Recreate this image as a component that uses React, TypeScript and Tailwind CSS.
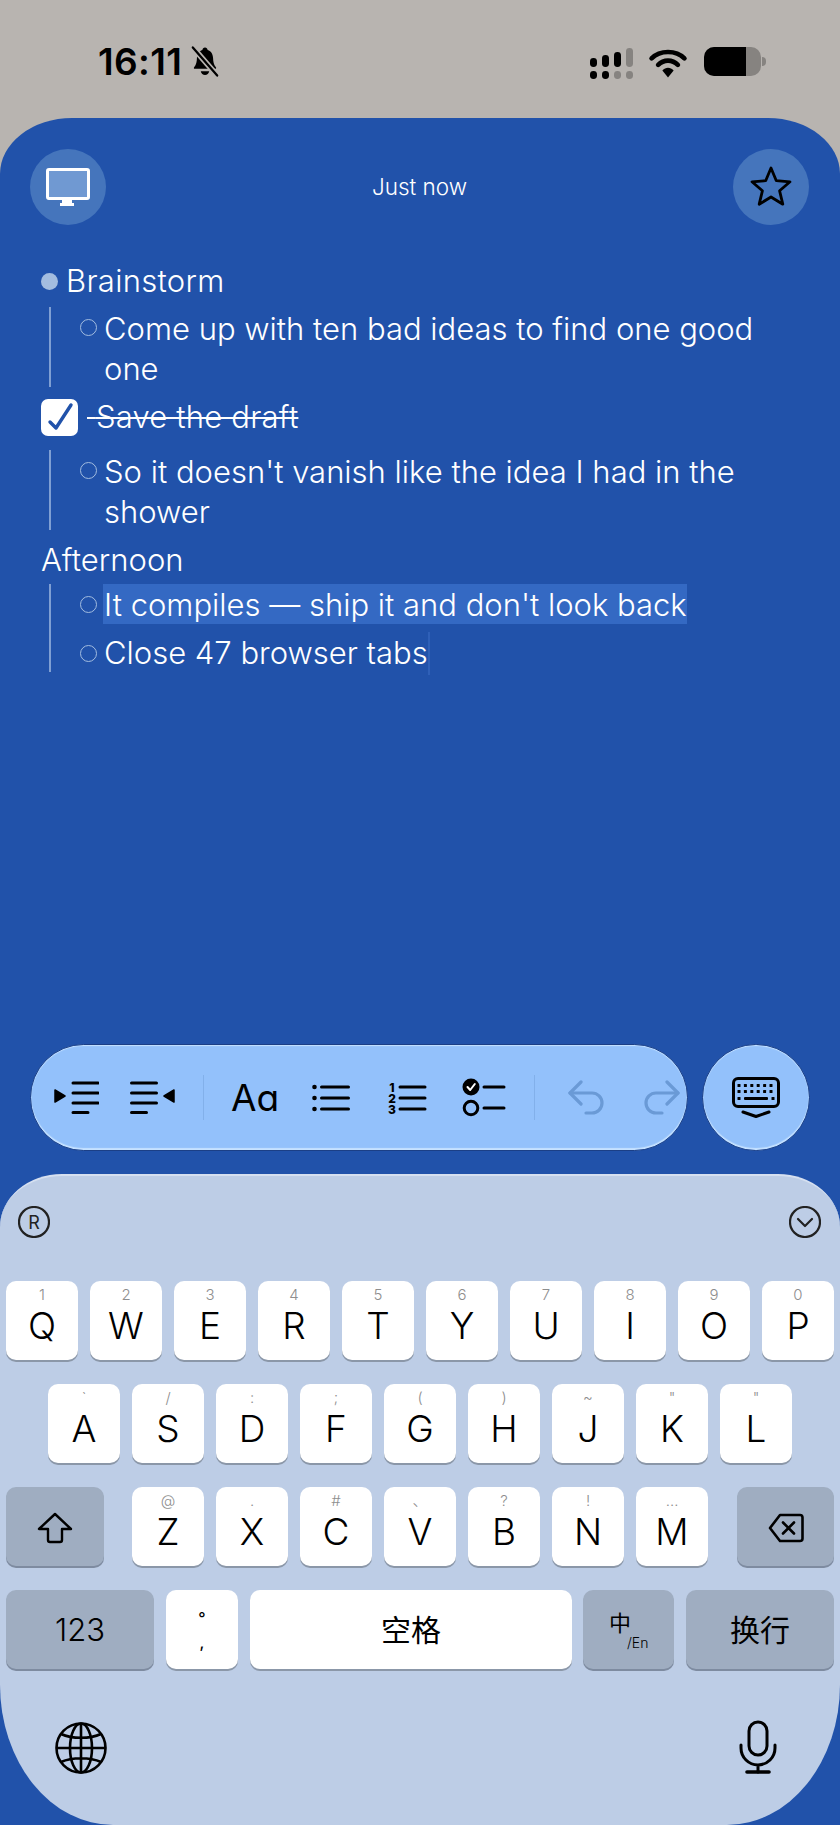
import React from 'react';

const FONT = '[font-family:Inter,"Noto_Sans_CJK_SC",sans-serif]';

interface KeyProps {
  label: string;
  hint?: string;
}

// letter key with the small secondary symbol on top
const Key: React.FC<KeyProps> = ({ label, hint }) => (
  <div className="relative flex h-[79px] w-[72px] items-center justify-center rounded-[10px] bg-white pt-[10px] text-[37px] font-light leading-none text-black shadow-[0_2px_0_#8b97a8]">
    <span className="absolute left-0 right-0 top-[5px] text-center text-[15px] font-light leading-[18px] text-[#8e8e8e]">{hint}</span>
    {label}
  </div>
);

const row1 = [['Q', '1'], ['W', '2'], ['E', '3'], ['R', '4'], ['T', '5'], ['Y', '6'], ['U', '7'], ['I', '8'], ['O', '9'], ['P', '0']];
const row2 = [['A', '`'], ['S', '/'], ['D', ':'], ['F', ';'], ['G', '('], ['H', ')'], ['J', '~'], ['K', '"'], ['L', '"']];
const row3 = [['Z', '@'], ['X', '.'], ['C', '#'], ['V', '、'], ['B', '?'], ['N', '!'], ['M', '…']];

const BulletDot = () => <span className="h-[17px] w-[17px] shrink-0 rounded-full bg-[#a3bde0]" />;
const BulletRing = () => <span className="h-[17px] w-[17px] shrink-0 rounded-full border-[1.5px] border-[#a3bde0]" />;

const iconDark = { fill: 'none', stroke: '#000', strokeWidth: 3, strokeLinecap: 'round' as const, strokeLinejoin: 'round' as const };

const App: React.FC = () => {
  return (
    <div className={`flex h-[1825px] w-[840px] flex-col overflow-hidden bg-[#b8b4b0] ${FONT}`}>
      {/* Status bar */}
      <div className="flex h-[118px] shrink-0 items-start justify-between pl-[98px] pr-[74px] pt-[42px]">
        <div className="flex items-start">
          <span className="text-[37px] font-semibold leading-[40px] tracking-[0.4px] text-black">16:11</span>
          <svg className="ml-[8px] mt-[3px]" width="30" height="33" viewBox="0 0 32 34">
            <path d="M16 2c1.600 0 2.600 1 2.800 2.600 4 1.200 5.600 4.600 5.800 8.600.2 4 .6 7 3 9.800.6.8.2 1.800-.8 1.800H5.200c-1 0-1.400-1-.8-1.800 2.400-2.800 2.800-5.800 3-9.800.2-4 1.800-7.400 5.800-8.600C13.400 3 14.400 2 16 2z" fill="#000" />
            <path d="M11.500 27.500h9c-.4 2.400-2.200 4-4.500 4s-4.100-1.600-4.500-4z" fill="#000" />
            <path d="M3 2l26 30" stroke="#b8b4b0" strokeWidth="6" />
            <path d="M3 2l26 30" stroke="#000" strokeWidth="2.400" strokeLinecap="round" />
          </svg>
        </div>
        <div className="flex items-start">
          <svg className="mt-[6px]" width="43" height="31" viewBox="0 0 43 31">
            <rect x="0" y="10" width="7" height="9" rx="3.400" fill="#000" />
            <rect x="12" y="7" width="7" height="12" rx="3.400" fill="#000" />
            <rect x="24" y="4" width="7" height="15" rx="3.400" fill="#000" />
            <rect x="36" y="0" width="7" height="19" rx="3.400" fill="#868380" />
            <rect x="0" y="23" width="7" height="8" rx="3.400" fill="#000" />
            <rect x="12" y="23" width="7" height="8" rx="3.400" fill="#000" />
            <rect x="24" y="23" width="7" height="8" rx="3.400" fill="#868380" />
            <rect x="36" y="23" width="7" height="8" rx="3.400" fill="#868380" />
          </svg>
          <svg className="ml-[15px] mt-[6px]" width="40" height="30" viewBox="0 0 40 32">
            <path d="M2.500 11C11.500 2 28.500 2 37.500 11" fill="none" stroke="#000" strokeWidth="5" strokeLinecap="round" />
            <path d="M9.500 18c6-6 15-6 21 0" fill="none" stroke="#000" strokeWidth="5" strokeLinecap="round" />
            <path d="M14 24c3.500-4 8.500-4 12 0l-6 7.500z" fill="#000" />
          </svg>
          <div className="ml-[16px] mt-[5px] flex h-[29px] w-[57px] overflow-hidden rounded-[10px] bg-[#868380]">
            <div className="h-full w-[42px] bg-black" />
          </div>
          <div className="ml-[1px] mt-[15px] h-[9px] w-[4px] rounded-r-full bg-[#868380]" />
        </div>
      </div>

      {/* Note */}
      <div className="relative flex flex-1 flex-col overflow-hidden rounded-tl-[72px_56px] rounded-tr-[72px_56px] bg-[#2152aa]">
        <div className="flex items-center justify-between pl-[30px] pr-[31px] pt-[31px]">
          <div className="flex h-[76px] w-[76px] items-center justify-center rounded-full bg-[#4575bc]">
            <svg width="44" height="38" viewBox="0 0 44 38">
              <path d="M3 0h38a3 3 0 0 1 3 3v26a3 3 0 0 1-3 3H26v3h2v3H14v-3h2v-3H3a3 3 0 0 1-3-3V3a3 3 0 0 1 3-3z" fill="#fff" />
              <rect x="3" y="3" width="38" height="26" fill="#7099d2" />
            </svg>
          </div>
          <span className="text-[22.5px] font-light leading-none text-white">Just now</span>
          <div className="flex h-[76px] w-[76px] items-center justify-center rounded-full bg-[#4575bc]">
            <svg width="42" height="42" viewBox="0 0 42 42">
              <path d="M21 2l5.300 12.700L40 15.800l-10.400 9L32.800 38.200 21 31 9.200 38.200l3.200-13.400L2 15.800l13.700-1.100z" fill="none" stroke="#000" strokeWidth="2.800" strokeLinejoin="round" />
            </svg>
          </div>
        </div>

        {/* Outline */}
        <div className="mt-[36px] text-[31px] font-[350] leading-[40px] text-white">
          <div className="ml-[41px] flex items-center gap-[8px]">
            <BulletDot />
            <span className="tracking-[0.3px]">Brainstorm</span>
          </div>
          <div className="ml-[49px] mt-[6px] h-[80px] w-[731px] border-l-[2px] border-[#7f9fd3] pl-[29px] pt-[2px]">
            <div className="flex items-start gap-[7px]">
              <span className="mt-[10px] flex"><BulletRing /></span>
              <span>Come up with ten bad ideas to find one good one</span>
            </div>
          </div>
          <div className="ml-[41px] mt-[10px] flex items-center">
            <div className="flex h-[37px] w-[37px] items-center justify-center rounded-[7px] bg-white">
              <svg width="30" height="30" viewBox="0 0 30 30">
                <path d="M5 20l6 6L26 3" fill="none" stroke="#2152aa" strokeWidth="3.400" strokeLinecap="round" strokeLinejoin="round" />
              </svg>
            </div>
            <span className="ml-[9px] tracking-[0.2px] line-through decoration-[2px]">{'\u00a0'}Save the draft</span>
          </div>
          <div className="ml-[49px] mt-[13px] h-[80px] w-[731px] border-l-[2px] border-[#7f9fd3] pl-[29px] pt-[2px]">
            <div className="flex items-start gap-[7px]">
              <span className="mt-[10px] flex"><BulletRing /></span>
              <span>So it doesn't vanish like the idea I had in the shower</span>
            </div>
          </div>
          <div className="ml-[41px] mt-[10px]">Afternoon</div>
          <div className="ml-[49px] mt-[4px] h-[88px] border-l-[2px] border-[#7f9fd3] pl-[29px]">
            <div className="flex items-center gap-[6px]">
              <BulletRing />
              <span className="bg-[#3469c3] pl-[1px]">
                <span className="relative top-[1px]">It compiles — ship it and don't look back</span>
              </span>
            </div>
            <div className="mt-[8px] flex items-center gap-[7px]">
              <BulletRing />
              <span className="relative -top-[1px]">Close 47 browser tabs</span>
              <span className="-ml-[7px] h-[43px] w-[2px] bg-[#2f60b8]" />
            </div>
          </div>
        </div>

        <div className="flex-1" />

        {/* Formatting toolbar */}
        <div className="flex items-center pl-[30px]">
          <div className="flex h-[107px] w-[658px] items-center rounded-full border border-[#1b3f86] bg-[#93c1fb] shadow-[inset_0_1px_1px_#c6e2ff,inset_0_-2px_1px_#c6e2ff]">
            <svg className="ml-[23px]" width="45" height="34" viewBox="0 0 45 34" {...iconDark}>
              <path d="M1 9l10 6-10 6z" fill="#000" strokeWidth="1.500" />
              <path d="M19 2h25M19 12h25M19 22h25M19 31.500h15" />
            </svg>
            <svg className="ml-[31px]" width="45" height="34" viewBox="0 0 45 34" {...iconDark}>
              <path d="M44 9l-10 6 10 6z" fill="#000" strokeWidth="1.500" />
              <path d="M1.500 2h25M1.500 12h25M1.500 22h25M1.500 31.500h15" />
            </svg>
            <span className="ml-[28px] h-[45px] w-[1px] bg-[#82b0ea]" />
            <span className="ml-[27px] w-[46px] text-[37px] font-normal leading-none text-black">Aɑ</span>
            <svg className="ml-[35px]" width="38" height="28" viewBox="0 0 38 28" {...iconDark}>
              <circle cx="2.500" cy="3" r="2.300" fill="#000" stroke="none" />
              <circle cx="2.500" cy="14" r="2.300" fill="#000" stroke="none" />
              <circle cx="2.500" cy="25" r="2.300" fill="#000" stroke="none" />
              <path d="M9.500 3h27M9.500 14h27M9.500 25h27" />
            </svg>
            <div className="relative ml-[37px] h-[34px] w-[40px]">
              <span className="absolute left-0 top-[1px] w-[10px] text-center text-[12px] font-extrabold leading-[11px] text-black">1</span>
              <span className="absolute left-0 top-[12px] w-[10px] text-center text-[12px] font-extrabold leading-[11px] text-black">2</span>
              <span className="absolute left-0 top-[23px] w-[10px] text-center text-[12px] font-extrabold leading-[11px] text-black">3</span>
              <svg className="absolute left-[11px] top-0" width="29" height="34" viewBox="0 0 29 34" {...iconDark}>
                <path d="M2 6h25M2 17h25M2 28h25" />
              </svg>
            </div>
            <svg className="ml-[35px]" width="44" height="40" viewBox="0 0 44 40">
              <circle cx="9" cy="9" r="8.500" fill="#000" />
              <path d="M5.500 9l2.700 3L12.800 6" fill="none" stroke="#fff" strokeWidth="2" strokeLinecap="round" strokeLinejoin="round" />
              <circle cx="9" cy="30" r="6.800" fill="none" stroke="#000" strokeWidth="3" />
              <path d="M22 9h20M22 30h20" stroke="#000" strokeWidth="3" strokeLinecap="round" />
            </svg>
            <span className="ml-[28px] h-[45px] w-[1px] bg-[#82b0ea]" />
            <svg className="ml-[33px]" width="36" height="36" viewBox="0 0 36 36" fill="none" stroke="#6a9ad6" strokeWidth="3.200" strokeLinecap="round" strokeLinejoin="round">
              <path d="M13 2L2 13l11 11" />
              <path d="M2 13h22a10 10 0 0 1 10 10 10 10 0 0 1-10 10h-6" />
            </svg>
            <svg className="ml-[40px]" width="36" height="36" viewBox="0 0 36 36" fill="none" stroke="#6a9ad6" strokeWidth="3.200" strokeLinecap="round" strokeLinejoin="round">
              <path d="M23 2l11 11-11 11" />
              <path d="M34 13H12A10 10 0 0 0 2 23a10 10 0 0 0 10 10h6" />
            </svg>
          </div>
          <div className="ml-[14px] flex h-[107px] w-[108px] items-center justify-center rounded-full border border-[#1b3f86] bg-[#93c1fb] shadow-[inset_0_1px_1px_#c6e2ff,inset_0_-2px_1px_#c6e2ff]">
            <svg width="48" height="42" viewBox="0 0 48 42">
              <rect x="1.500" y="1.500" width="45" height="28" rx="4.500" fill="none" stroke="#000" strokeWidth="3" />
              <g fill="#000">
                {[7, 13.400, 19.800, 26.200, 32.600, 39].map((x) => (
                  <React.Fragment key={x}>
                    <rect x={x - 1.500} y="7" width="3" height="3" rx="0.500" />
                    <rect x={x - 1.500} y="13" width="3" height="3" rx="0.500" />
                  </React.Fragment>
                ))}
                <rect x="5.500" y="20" width="3" height="3" rx="0.500" />
                <rect x="12" y="20" width="24" height="3" rx="1" />
                <rect x="39.500" y="20" width="3" height="3" rx="0.500" />
              </g>
              <path d="M11 35l13 4.500L37 35" fill="none" stroke="#000" strokeWidth="3" strokeLinecap="round" strokeLinejoin="round" />
            </svg>
          </div>
        </div>

        {/* Keyboard */}
        <div className="mt-[23px] h-[651px] rounded-tl-[62px_53px] rounded-tr-[62px_53px] rounded-bl-[113px_140px] rounded-br-[113px_140px] border-t-2 border-[#d6e0f0] bg-[#bdcde6]">
          <div className="flex items-center justify-between pl-[18px] pr-[19px] pt-[30px]">
            <svg width="32" height="32" viewBox="0 0 32 32">
              <circle cx="16" cy="16" r="15" fill="none" stroke="#222" strokeWidth="2.200" />
              <text x="16" y="22.500" textAnchor="middle" fontSize="18" fontWeight="400" fill="#222">R</text>
            </svg>
            <svg width="32" height="32" viewBox="0 0 32 32" fill="none" stroke="#222" strokeWidth="2.200" strokeLinecap="round" strokeLinejoin="round">
              <circle cx="16" cy="16" r="15" />
              <path d="M9 13l7 7 7-7" />
            </svg>
          </div>
          <div className="mt-[43px] flex justify-between px-[6px]">
            {row1.map(([k, h]) => <Key key={k} label={k} hint={h} />)}
          </div>
          <div className="mt-[24px] flex gap-[12px] pl-[48px]">
            {row2.map(([k, h]) => <Key key={k} label={k} hint={h} />)}
          </div>
          <div className="mt-[24px] flex items-stretch px-[6px]">
            <div className="mr-[28px] flex h-[79px] w-[98px] items-center justify-center rounded-[10px] bg-[#9fadc1] pt-[3px] shadow-[0_2px_0_#7e8ba0]">
              <svg width="36" height="32" viewBox="0 0 36 32" fill="none" stroke="#000" strokeWidth="2.400" strokeLinejoin="round">
                <path d="M18 2L2 17h9v11a2 2 0 0 0 2 2h10a2 2 0 0 0 2-2V17h9z" />
              </svg>
            </div>
            <div className="flex gap-[12px]">
              {row3.map(([k, h]) => <Key key={k} label={k} hint={h} />)}
            </div>
            <div className="ml-[29px] flex h-[79px] w-[97px] items-center justify-center rounded-[10px] bg-[#9fadc1] pt-[3px] shadow-[0_2px_0_#7e8ba0]">
              <svg width="36" height="30" viewBox="0 0 36 30" fill="none" stroke="#000" strokeWidth="2.600" strokeLinejoin="round" strokeLinecap="round">
                <path d="M12 2h20a2.500 2.500 0 0 1 2.500 2.500v21A2.500 2.500 0 0 1 32 28H12L2 15z" />
                <path d="M15 9.500l11 11M26 9.500l-11 11" />
              </svg>
            </div>
          </div>
          <div className="mt-[24px] flex px-[6px]">
            <div className="flex h-[79px] w-[148px] items-center justify-center rounded-[10px] bg-[#9fadc1] text-[31px] font-light leading-none text-black shadow-[0_2px_0_#7e8ba0]">123</div>
            <div className="ml-[12px] flex h-[79px] w-[72px] flex-col items-center justify-center rounded-[10px] bg-white text-[16px] font-medium leading-[24px] text-black shadow-[0_2px_0_#8b97a8]">
              <span>°</span>
              <span>,</span>
            </div>
            <div className="ml-[12px] flex h-[79px] w-[322px] items-center justify-center rounded-[10px] bg-white text-[30px] font-normal leading-none text-black shadow-[0_2px_0_#8b97a8]">空格</div>
            <div className="relative ml-[11px] h-[79px] w-[91px] rounded-[10px] bg-[#9fadc1] text-black shadow-[0_2px_0_#7e8ba0]">
              <span className="absolute left-[26px] top-[22px] text-[22px] font-normal leading-none">中</span>
              <span className="absolute left-[44px] top-[46px] text-[14px] font-light leading-none">/En</span>
            </div>
            <div className="ml-[12px] flex h-[79px] w-[148px] items-center justify-center rounded-[10px] bg-[#9fadc1] text-[30px] font-normal leading-none text-black shadow-[0_2px_0_#7e8ba0]">换行</div>
          </div>
          <div className="mt-[51px] flex items-center justify-between pl-[55px] pr-[62px]">
            <svg width="52" height="52" viewBox="0 0 52 52" fill="none" stroke="#000" strokeWidth="2.600">
              <circle cx="26" cy="26" r="24.500" />
              <ellipse cx="26" cy="26" rx="11" ry="24.500" />
              <path d="M26 1.500v49M1.500 26h49M6 12c11 5 29 5 40 0M6 40c11-5 29-5 40 0" />
            </svg>
            <svg width="40" height="56" viewBox="0 0 40 56" fill="none" stroke="#000" strokeWidth="3" strokeLinecap="round">
              <rect x="11" y="2" width="18" height="33" rx="9" />
              <path d="M3 25v3a17 17 0 0 0 34 0v-3M20 45v7" />
              <path d="M9 52h22" strokeWidth="3.600" />
            </svg>
          </div>
        </div>
      </div>
    </div>
  );
};

export default App;
